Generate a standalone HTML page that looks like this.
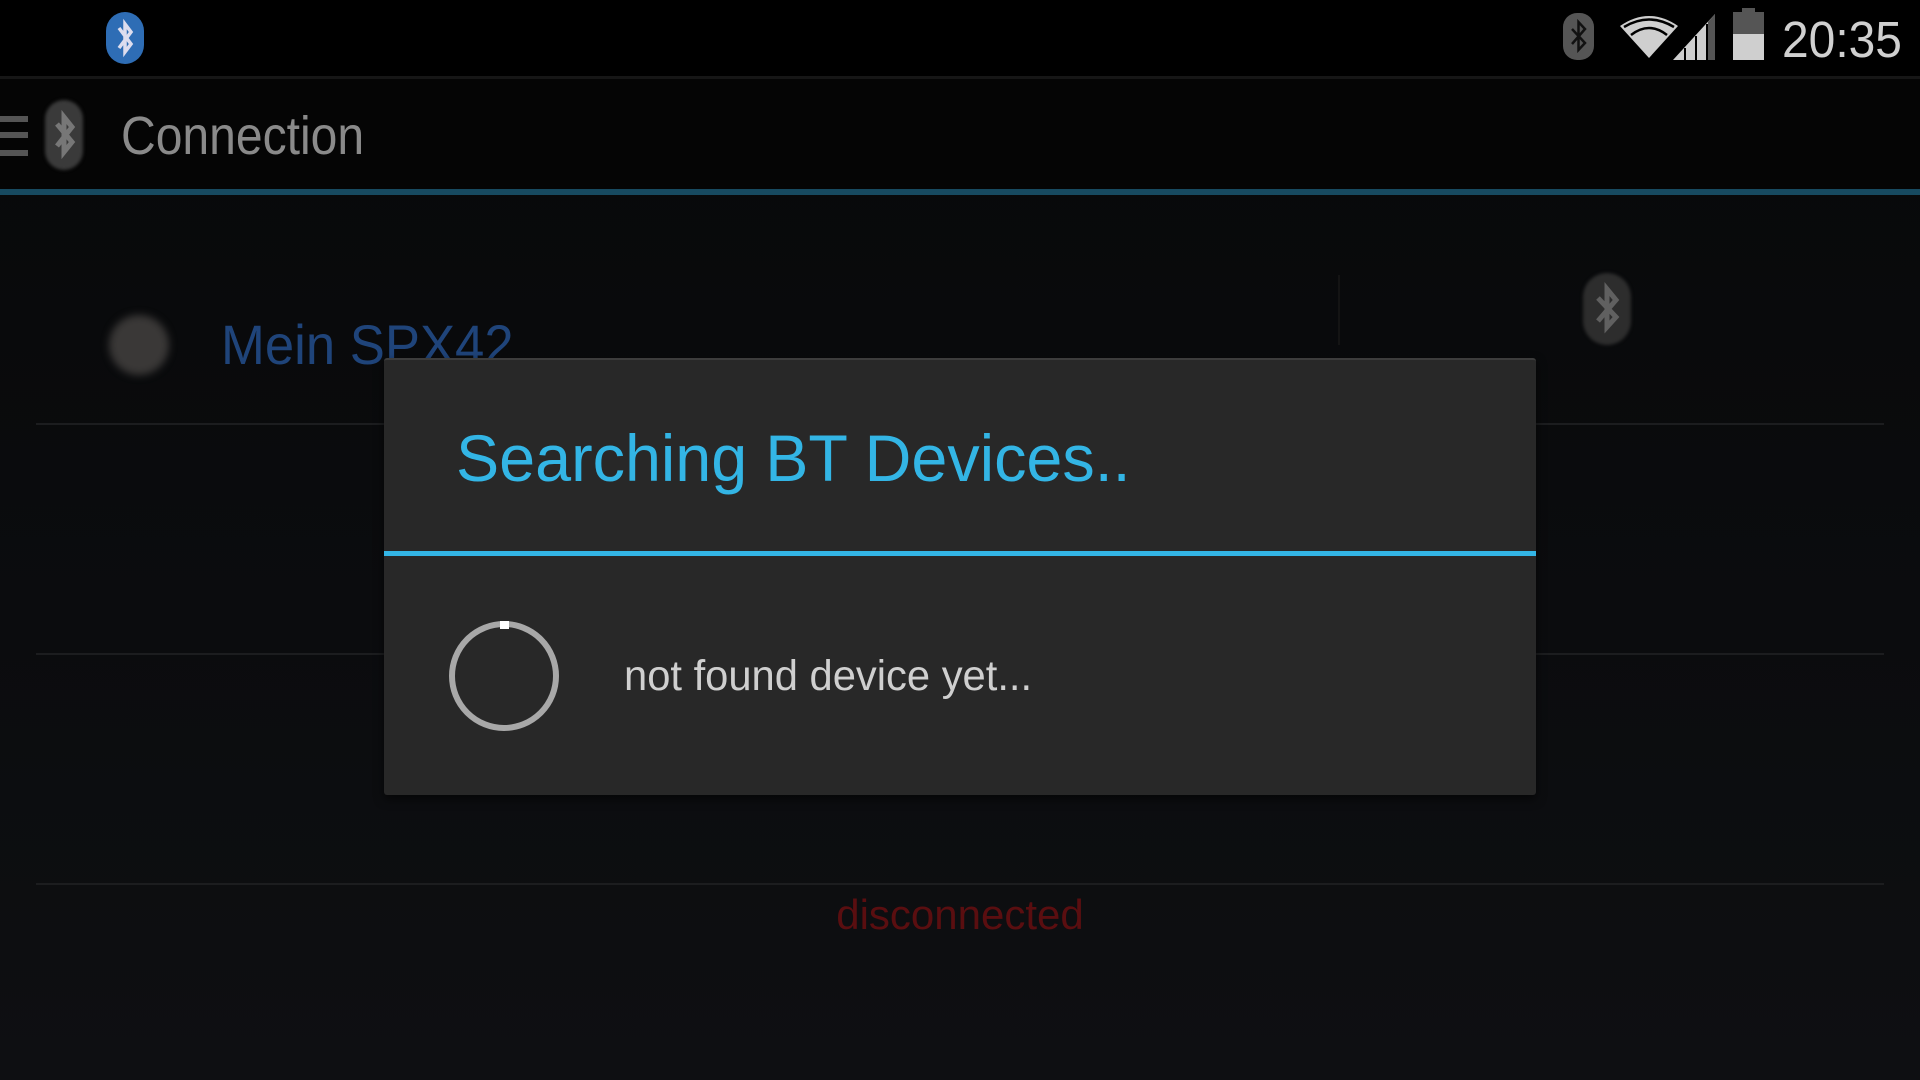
<!DOCTYPE html>
<html><head><meta charset="utf-8"><style>
*{margin:0;padding:0;box-sizing:border-box}
body{width:1920px;height:1080px;overflow:hidden;background:linear-gradient(#070809,#0e0f12);font-family:"Liberation Sans",sans-serif;position:relative}
.abs{position:absolute}
.sx{transform-origin:0 0;white-space:nowrap}
</style></head><body>
<div class="abs" style="left:0;top:0;width:1920px;height:76px;background:#000"></div>
<div class="abs" style="left:0;top:76px;width:1920px;height:3px;background:#161616"></div>
<div class="abs" style="left:0;top:79px;width:1920px;height:111px;background:#050505"></div>
<div class="abs" style="left:0;top:189px;width:1920px;height:6px;background:#174a60"></div>
<!-- top-left notification bt icon -->
<div class="abs" style="left:106px;top:12px;width:38px;height:52px;border-radius:19px;background:#2e6db5"></div>
<svg class="abs" style="left:108px;top:12px" width="34" height="52"><path d="M11 16 L23 32 L17 40 L17 12 L23 20 L11 36" stroke="#dde" stroke-width="3.5" fill="none"/></svg>
<!-- status right -->
<div class="abs" style="left:1563px;top:13px;width:31px;height:47px;border-radius:14px;background:#555"></div>
<svg class="abs" style="left:1563px;top:13px" width="31" height="47"><path d="M9 16 L22 30 L15.5 37 L15.5 9 L22 16 L9 31" stroke="#111" stroke-width="2.5" fill="none"/></svg>
<svg class="abs" style="left:1620px;top:14px" width="100" height="48"><path d="M0 12 Q29 -8 58 12 L29 44 Z" fill="#cfcfcf"/><path d="M4 13 Q29 -2 54 13" stroke="#000" stroke-width="2.5" fill="none"/><path d="M11 21 Q29 7 47 21" stroke="#000" stroke-width="2.5" fill="none"/><path d="M53 46 L95 0 L95 46 Z" fill="#cfcfcf"/><path d="M64 34 L66 34 L66 46 L64 46 Z M75 22 L77 22 L77 46 L75 46Z M86 10 L88 10 L88 46 L86 46Z" fill="#000"/><path d="M88 8 L95 0 L95 46 L88 46 Z" fill="#555"/></svg>
<div class="abs" style="left:1733px;top:12px;width:31px;height:48px;background:#cfcfcf"></div>
<div class="abs" style="left:1733px;top:12px;width:31px;height:22px;background:#555"></div>
<div class="abs" style="left:1742px;top:8px;width:13px;height:5px;background:#555"></div>
<div class="abs sx" style="left:1782px;top:12px;font-size:51px;color:#d0d0d0;line-height:56px;transform:scaleX(0.94)">20:35</div>
<!-- action bar -->
<div class="abs" style="left:0;top:116px;width:28px;height:6px;background:#555"></div>
<div class="abs" style="left:0;top:132px;width:28px;height:6px;background:#555"></div>
<div class="abs" style="left:0;top:150px;width:28px;height:6px;background:#555"></div>
<div class="abs" style="left:45px;top:100px;width:38px;height:70px;border-radius:19px;background:#3a3a3a;filter:blur(1.5px)"></div>
<svg class="abs" style="left:45px;top:100px" width="38" height="70"><path d="M12 24 L27 42 L19 52 L19 17 L27 27 L12 46" stroke="#777" stroke-width="5" fill="none"/></svg>
<div class="abs sx" style="left:121px;top:106px;font-size:54px;color:#8a8a8a;line-height:60px;transform:scaleX(0.89)">Connection</div>
<!-- list -->
<div class="abs" style="left:109px;top:315px;width:60px;height:60px;border-radius:50%;background:#3a3837;filter:blur(4px)"></div>
<div class="abs sx" style="left:221px;top:314px;font-size:56px;color:#1f447a;line-height:62px;transform:scaleX(0.94)">Mein SPX42</div>
<div class="abs" style="left:1338px;top:275px;width:2px;height:70px;background:#141414"></div>
<div class="abs" style="left:1583px;top:273px;width:48px;height:72px;border-radius:24px;background:#2d2d2d;filter:blur(1.5px)"></div>
<svg class="abs" style="left:1583px;top:273px" width="48" height="72"><path d="M15 25 L33 44 L24 54 L24 16 L33 27 L15 48" stroke="#606060" stroke-width="5" fill="none"/></svg>
<div class="abs" style="left:36px;top:423px;width:1848px;height:2px;background:#1c1d1f"></div>
<div class="abs" style="left:36px;top:653px;width:1848px;height:2px;background:#1c1d1f"></div>
<div class="abs" style="left:36px;top:883px;width:1848px;height:2px;background:#1c1d1f"></div>
<div class="abs" style="left:0;top:890px;width:1920px;text-align:center;font-size:42px;color:#5a0e10;line-height:50px">disconnected</div>
<!-- dialog -->
<div class="abs" style="left:384px;top:358px;width:1152px;height:437px;background:#282828;border-top:2px solid #3c3c3c;border-radius:3px;box-shadow:0 4px 10px rgba(0,0,0,.6)"></div>
<div class="abs" style="left:384px;top:551px;width:1152px;height:5px;background:#33b5e5"></div>
<div class="abs sx" style="left:456px;top:420px;font-size:66px;color:#33b5e5;line-height:76px;transform:scaleX(0.98)">Searching BT Devices..</div>
<svg class="abs" style="left:446px;top:618px" width="116" height="116"><circle cx="58" cy="58" r="52" stroke="#a8a8a8" stroke-width="6" fill="none"/><rect x="54" y="3" width="9" height="8" fill="#fff"/></svg>
<div class="abs sx" style="left:624px;top:650px;font-size:43px;color:#cfcfcf;line-height:52px;transform:scaleX(0.97)">not found device yet...</div>
</body></html>
